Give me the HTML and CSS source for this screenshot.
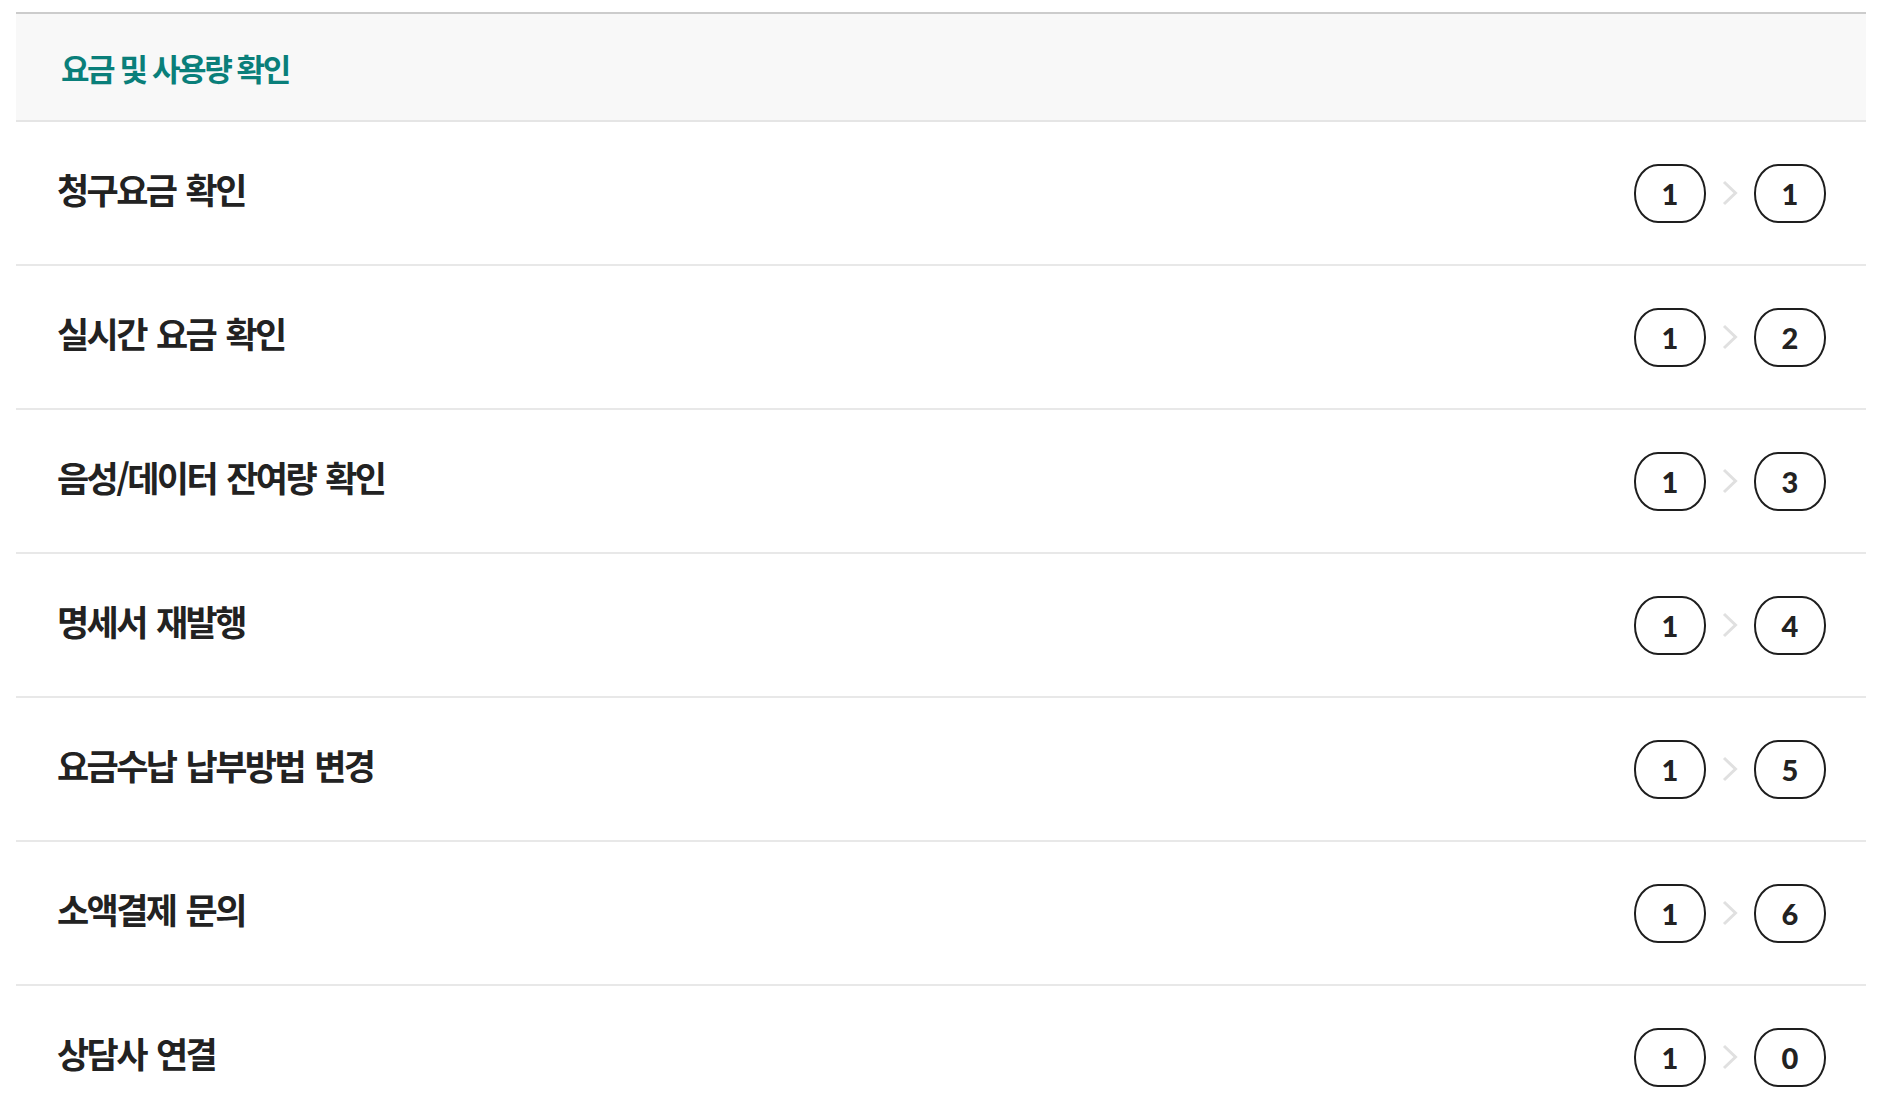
FILE: index.html
```html
<!DOCTYPE html>
<html lang="ko">
<head>
<meta charset="utf-8">
<link rel="stylesheet" href="styles.css">
</head>
<body>
<section class="menu">
  <h2 class="menu-title">요금 및 사용량 확인</h2>
  <ul class="menu-list">
    <li class="menu-item"><span class="label">청구요금 확인</span><span class="keys"><span class="key">1</span><svg class="arrow" viewBox="0 0 16 26"><polyline points="2,2 13.5,13 2,24"/></svg><span class="key">1</span></span></li>
    <li class="menu-item"><span class="label">실시간 요금 확인</span><span class="keys"><span class="key">1</span><svg class="arrow" viewBox="0 0 16 26"><polyline points="2,2 13.5,13 2,24"/></svg><span class="key">2</span></span></li>
    <li class="menu-item"><span class="label">음성/데이터 잔여량 확인</span><span class="keys"><span class="key">1</span><svg class="arrow" viewBox="0 0 16 26"><polyline points="2,2 13.5,13 2,24"/></svg><span class="key">3</span></span></li>
    <li class="menu-item"><span class="label">명세서 재발행</span><span class="keys"><span class="key">1</span><svg class="arrow" viewBox="0 0 16 26"><polyline points="2,2 13.5,13 2,24"/></svg><span class="key">4</span></span></li>
    <li class="menu-item"><span class="label">요금수납 납부방법 변경</span><span class="keys"><span class="key">1</span><svg class="arrow" viewBox="0 0 16 26"><polyline points="2,2 13.5,13 2,24"/></svg><span class="key">5</span></span></li>
    <li class="menu-item"><span class="label">소액결제 문의</span><span class="keys"><span class="key">1</span><svg class="arrow" viewBox="0 0 16 26"><polyline points="2,2 13.5,13 2,24"/></svg><span class="key">6</span></span></li>
    <li class="menu-item"><span class="label">상담사 연결</span><span class="keys"><span class="key">1</span><svg class="arrow" viewBox="0 0 16 26"><polyline points="2,2 13.5,13 2,24"/></svg><span class="key">0</span></span></li>
  </ul>
</section>
</body>
</html>
```
FILE: styles.css
```css
html, body {
  margin: 0;
  padding: 0;
  background: #fff;
}
body {
  padding: 12px 24px 0 16px;
  font-family: "Noto Sans CJK KR", "Noto Sans", sans-serif;
  color: #222;
}
.menu {
  border-top: 2px solid #cccccc;
}
.menu-title {
  margin: 0;
  height: 106px;
  display: flex;
  align-items: center;
  padding-left: 45px;
  background: #f8f8f8;
  border-bottom: 2px solid #e5e5e5;
  color: #0a7f7a;
  font-size: 31px;
  font-weight: 700;
  letter-spacing: -2.4px;
}
.menu-list {
  list-style: none;
  margin: 0;
  padding: 0;
}
.menu-item {
  height: 142px;
  border-bottom: 2px solid #e8e8e8;
  display: flex;
  align-items: center;
  justify-content: space-between;
  padding: 0 40px 0 41px;
}
.label {
  font-size: 35px;
  font-weight: 700;
  color: #222;
  letter-spacing: -2.6px;
  word-spacing: 3px;
  padding-bottom: 9px;
}
.keys {
  display: flex;
  align-items: center;
  gap: 16px;
}
.key {
  box-sizing: border-box;
  width: 72px;
  height: 59px;
  border: 2px solid #1e1e1e;
  border-radius: 24px / 29px;
  display: flex;
  align-items: center;
  justify-content: center;
  font-family: Lato, "Noto Sans", sans-serif;
  font-size: 29px;
  font-weight: 900;
  color: #222;
  line-height: 1;
}
.arrow {
  width: 16px;
  height: 26px;
  fill: none;
  stroke: #e0e0e0;
  stroke-width: 3;
}
```
